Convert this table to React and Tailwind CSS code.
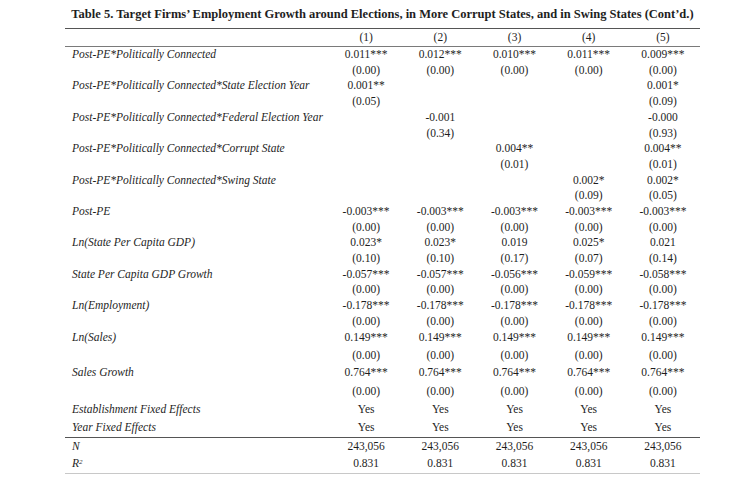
import React from 'react'

const blank = ["", "", "", "", ""];
const five = (v) => [v, v, v, v, v];

// rows of the regression table, h = row height in px (written out as classes)
const rows = [
    { label: "Post-PE*Politically Connected", vals: ["0.011***", "0.012***", "0.010***", "0.011***", "0.009***"], h: "h-[15.7px]" },
    { vals: five("(0.00)"), h: "h-[15.7px]" },
    { label: "Post-PE*Politically Connected*State Election Year", vals: ["0.001**", "", "", "", "0.001*"], h: "h-[15.7px]" },
    { vals: ["(0.05)", "", "", "", "(0.09)"], h: "h-[15.7px]" },
    { label: "Post-PE*Politically Connected*Federal Election Year", vals: ["", "-0.001", "", "", "-0.000"], h: "h-[15.7px]" },
    { vals: ["", "(0.34)", "", "", "(0.93)"], h: "h-[15.7px]" },
    { label: "Post-PE*Politically Connected*Corrupt State", vals: ["", "", "0.004**", "", "0.004**"], h: "h-[15.7px]" },
    { vals: ["", "", "(0.01)", "", "(0.01)"], h: "h-[15.7px]" },
    { label: "Post-PE*Politically Connected*Swing State", vals: ["", "", "", "0.002*", "0.002*"], h: "h-[15.7px]" },
    { vals: ["", "", "", "(0.09)", "(0.05)"], h: "h-[15.7px]" },
    { label: "Post-PE", vals: five("-0.003***"), h: "h-[15.7px]" },
    { vals: five("(0.00)"), h: "h-[15.7px]" },
    { label: "Ln(State Per Capita GDP)", vals: ["0.023*", "0.023*", "0.019", "0.025*", "0.021"], h: "h-[15.7px]" },
    { vals: ["(0.10)", "(0.10)", "(0.17)", "(0.07)", "(0.14)"], h: "h-[15.7px]" },
    { label: "State Per Capita GDP Growth", vals: ["-0.057***", "-0.057***", "-0.056***", "-0.059***", "-0.058***"], h: "h-[15.7px]" },
    { vals: five("(0.00)"), h: "h-[15.7px]" },
    { label: "Ln(Employment)", vals: five("-0.178***"), h: "h-[15.5px]" },
    { vals: five("(0.00)"), h: "h-[16px]" },
    { label: "Ln(Sales)", vals: five("0.149***"), h: "h-[17px]" },
    { vals: five("(0.00)"), h: "h-[18px]" },
    { label: "Sales Growth", vals: five("0.764***"), h: "h-[17px]" },
    { vals: five("(0.00)"), h: "h-[20px]" },
    { label: "Establishment Fixed Effects", vals: five("Yes"), h: "h-[17px]" },
    { label: "Year Fixed Effects", vals: five("Yes"), h: "h-[18px]" },
];

const Row = ({ label, vals, h }) => (
    <div className={`flex items-center ${h}`}>
        <div className="w-[264px] pl-[7px] italic whitespace-nowrap">{label}</div>
        {(vals || blank).map((v, i) => (
            <div key={i} className="flex-1 text-center whitespace-nowrap">{v}</div>
        ))}
    </div>
);

const App = () => {
    return (
        <div className="w-[750px] h-[489px] bg-white text-[#1e1e1e] font-['Liberation_Serif',serif] text-[11.5px] leading-none">
            <div className="ml-[65px] w-[635px]">
                <div className="h-[28px] flex items-center justify-center">
                    <h1 className="font-bold text-[12.5px] whitespace-nowrap">
                        Table 5. Target Firms’ Employment Growth around Elections, in More Corrupt States, and in Swing States (Cont’d.)
                    </h1>
                </div>
                <div className="h-px bg-[#555]" />
                <div className="flex items-center h-[17px]">
                    <div className="w-[264px]" />
                    {["(1)", "(2)", "(3)", "(4)", "(5)"].map((c) => (
                        <div key={c} className="flex-1 text-center">{c}</div>
                    ))}
                </div>
                <div className="h-px bg-[#7a7a7a]" />
                {rows.map((r, i) => (
                    <Row key={i} {...r} />
                ))}
                <div className="h-px bg-[#555]" />
                <Row label="N" vals={five("243,056")} h="h-[18px]" />
                <Row
                    label={<span>R<span className="text-[7px] relative -top-[3px]">2</span></span>}
                    vals={five("0.831")}
                    h="h-[17px]"
                />
                <div className="h-px bg-[#c8c8c8]" />
            </div>
        </div>
    );
};

export default App;
